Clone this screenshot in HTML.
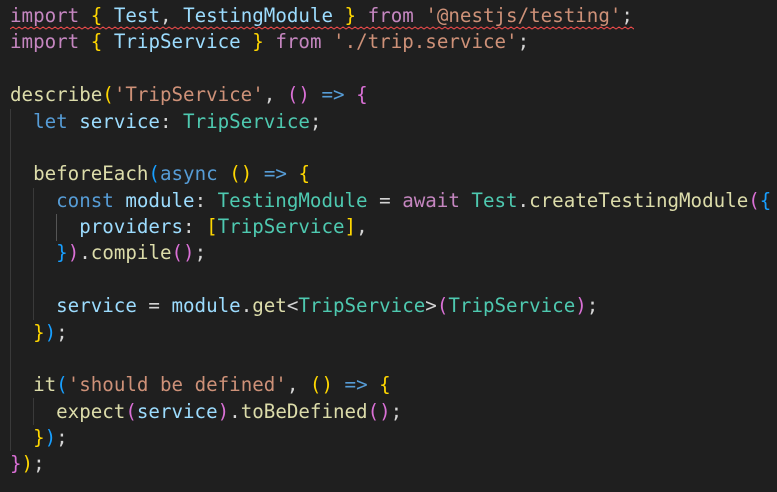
<!DOCTYPE html>
<html><head><meta charset="utf-8"><style>
html,body{margin:0;padding:0;background:#1f1f1f;width:777px;height:492px;overflow:hidden}
pre{margin:0;padding:3px 0 0 10px;font-family:"DejaVu Sans Mono","Liberation Mono",monospace;font-size:19.17px;line-height:26.38px;color:#d4d4d4;position:relative;z-index:1}
.k{color:#c586c0}.v{color:#9cdcfe}.s{color:#ce9178}.f{color:#dcdcaa}.b{color:#569cd6}.t{color:#4ec9b0}
.y{color:#ffd700}.p{color:#da70d6}.c{color:#179fff}
.g{position:absolute;width:1px;background:#3a3a3a}
</style></head><body>
<div class="g" style="left:10px;top:109px;height:342px"></div>
<div class="g" style="left:33px;top:188px;height:132px"></div>
<div class="g" style="left:33px;top:398px;height:27px"></div>
<div class="g" style="left:56px;top:214px;height:27px;background:#555"></div>
<svg style="position:absolute;left:10px;top:26px" width="624" height="5"><path d="M0 3 l3 -2 l3 2 l3 -2 l3 2 l3 -2 l3 2 l3 -2 l3 2 l3 -2 l3 2 l3 -2 l3 2 l3 -2 l3 2 l3 -2 l3 2 l3 -2 l3 2 l3 -2 l3 2 l3 -2 l3 2 l3 -2 l3 2 l3 -2 l3 2 l3 -2 l3 2 l3 -2 l3 2 l3 -2 l3 2 l3 -2 l3 2 l3 -2 l3 2 l3 -2 l3 2 l3 -2 l3 2 l3 -2 l3 2 l3 -2 l3 2 l3 -2 l3 2 l3 -2 l3 2 l3 -2 l3 2 l3 -2 l3 2 l3 -2 l3 2 l3 -2 l3 2 l3 -2 l3 2 l3 -2 l3 2 l3 -2 l3 2 l3 -2 l3 2 l3 -2 l3 2 l3 -2 l3 2 l3 -2 l3 2 l3 -2 l3 2 l3 -2 l3 2 l3 -2 l3 2 l3 -2 l3 2 l3 -2 l3 2 l3 -2 l3 2 l3 -2 l3 2 l3 -2 l3 2 l3 -2 l3 2 l3 -2 l3 2 l3 -2 l3 2 l3 -2 l3 2 l3 -2 l3 2 l3 -2 l3 2 l3 -2 l3 2 l3 -2 l3 2 l3 -2 l3 2 l3 -2 l3 2 l3 -2 l3 2 l3 -2 l3 2 l3 -2 l3 2 l3 -2 l3 2 l3 -2 l3 2 l3 -2 l3 2 l3 -2 l3 2 l3 -2 l3 2 l3 -2 l3 2 l3 -2 l3 2 l3 -2 l3 2 l3 -2 l3 2 l3 -2 l3 2 l3 -2 l3 2 l3 -2 l3 2 l3 -2 l3 2 l3 -2 l3 2 l3 -2 l3 2 l3 -2 l3 2 l3 -2 l3 2 l3 -2 l3 2 l3 -2 l3 2 l3 -2 l3 2 l3 -2 l3 2 l3 -2 l3 2 l3 -2 l3 2 l3 -2 l3 2 l3 -2 l3 2 l3 -2 l3 2 l3 -2 l3 2 l3 -2 l3 2 l3 -2 l3 2 l3 -2 l3 2 l3 -2 l3 2 l3 -2 l3 2 l3 -2 l3 2 l3 -2 l3 2 l3 -2 l3 2 l3 -2 l3 2 l3 -2 l3 2 l3 -2 l3 2 l3 -2 l3 2 l3 -2 l3 2 l3 -2 l3 2 l3 -2 l3 2 l3 -2 l3 2 l3 -2 l3 2 l3 -2 l3 2 l3 -2 l3 2 l3 -2 l3 2 l3 -2 l3 2 l3 -2 l3 2 l3 -2 l3 2 l3 -2 l3 2 l3 -2 l3 2 l3 -2 l3 2 l3 -2 l3 2 l3 -2 l3 2 l3 -2 l3 2 l3 -2 l3 2 l3 -2 l3 2 l3 -2 l3 2 l3 -2 l3 2 l3 -2 l3 2 l3 -2 l3 2" fill="none" stroke="#f14c4c" stroke-width="1"/></svg>
<pre><span class="k">import</span> <span class="y">{</span> <span class="v">Test</span>, <span class="v">TestingModule</span> <span class="y">}</span> <span class="k">from</span> <span class="s">'@nestjs/testing'</span>;
<span class="k">import</span> <span class="y">{</span> <span class="v">TripService</span> <span class="y">}</span> <span class="k">from</span> <span class="s">'./trip.service'</span>;

<span class="f">describe</span><span class="y">(</span><span class="s">'TripService'</span>, <span class="p">()</span> <span class="b">=&gt;</span> <span class="p">{</span>
  <span class="b">let</span> <span class="v">service</span>: <span class="t">TripService</span>;

  <span class="f">beforeEach</span><span class="c">(</span><span class="b">async</span> <span class="y">()</span> <span class="b">=&gt;</span> <span class="y">{</span>
    <span class="b">const</span> <span class="v">module</span>: <span class="t">TestingModule</span> = <span class="k">await</span> <span class="t">Test</span>.<span class="f">createTestingModule</span><span class="p">(</span><span class="c">{</span>
      <span class="v">providers</span>: <span class="y">[</span><span class="t">TripService</span><span class="y">]</span>,
    <span class="c">}</span><span class="p">)</span>.<span class="f">compile</span><span class="p">()</span>;

    <span class="v">service</span> = <span class="v">module</span>.<span class="f">get</span>&lt;<span class="t">TripService</span>&gt;<span class="p">(</span><span class="t">TripService</span><span class="p">)</span>;
  <span class="y">}</span><span class="c">)</span>;

  <span class="f">it</span><span class="c">(</span><span class="s">'should be defined'</span>, <span class="y">()</span> <span class="b">=&gt;</span> <span class="y">{</span>
    <span class="f">expect</span><span class="p">(</span><span class="v">service</span><span class="p">)</span>.<span class="f">toBeDefined</span><span class="p">()</span>;
  <span class="y">}</span><span class="c">)</span>;
<span class="p">}</span><span class="y">)</span>;
</pre>
</body></html>
